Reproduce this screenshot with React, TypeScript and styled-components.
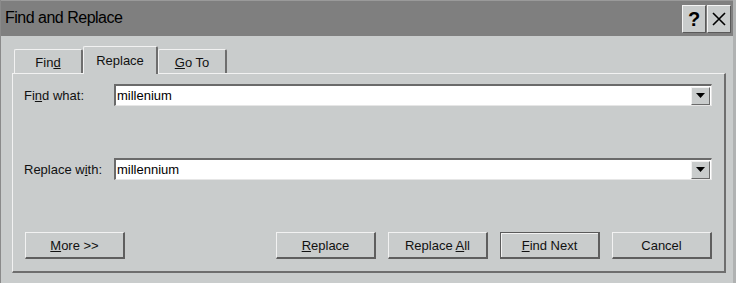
import React from "react";
import styled, { createGlobalStyle } from "styled-components";

const Global = createGlobalStyle`
  html, body { margin: 0; padding: 0; background: #c9cccc; }
  body { font-family: "Liberation Sans", Arial, sans-serif; }
`;

const Window = styled.div`
  width: 736px;
  height: 283px;
  box-sizing: border-box;
  background: #c9cccc;
  border-left: 1px solid #8a8a8a;
  border-right: 3px solid #b0b2b2;
  display: flex;
  flex-direction: column;
  overflow: hidden;
`;

const TitleBar = styled.div`
  height: 35px;
  background: #7f7f7f;
  border-top: 1px solid #9a9a9a;
  display: flex;
  align-items: flex-start;
  justify-content: space-between;
  padding-left: 4px;
`;

const Title = styled.div`
  font-size: 16px;
  letter-spacing: -0.5px;
  line-height: 34px;
  color: #000;
`;

const CaptionButtons = styled.div`
  display: flex;
  gap: 1px;
  padding-top: 4px;
  padding-right: 2px;
`;

const CaptionButton = styled.div`
  width: 24px;
  height: 28px;
  box-sizing: border-box;
  background: #c9cccc;
  border-top: 1px solid #f4f4f4;
  border-left: 1px solid #f4f4f4;
  border-right: 1px solid #5a5a5a;
  border-bottom: 1px solid #5a5a5a;
  display: flex;
  align-items: center;
  justify-content: center;
  font-weight: bold;
  font-size: 20px;
`;

const Body = styled.div`
  padding: 10px 11px 0 11px;
  display: flex;
  flex-direction: column;
`;

const TabRow = styled.div`
  display: flex;
  align-items: flex-end;
  height: 27px;
  padding-left: 2px;
  position: relative;
  z-index: 1;
`;

const Tab = styled.div<{ $active?: boolean }>`
  box-sizing: border-box;
  width: ${(p) => (p.$active ? 75 : 69)}px;
  height: ${(p) => (p.$active ? 28 : 24)}px;
  margin-bottom: ${(p) => (p.$active ? -1 : 0)}px;
  background: #c9cccc;
  border-top: 1px solid #f2f2f2;
  border-left: 1px solid #f2f2f2;
  border-right: 2px solid #6e6e6e;
  border-top-left-radius: 2px;
  border-top-right-radius: 2px;
  display: flex;
  align-items: center;
  justify-content: center;
  font-size: 13px;
  color: #111;
  padding-top: ${(p) => (p.$active ? 0 : 2)}px;
`;

const Panel = styled.div`
  width: 714px;
  height: 200px;
  box-sizing: border-box;
  border-top: 1px solid #f2f2f2;
  border-left: 1px solid #f2f2f2;
  border-right: 2px solid #6e6e6e;
  border-bottom: 2px solid #6e6e6e;
  padding: 10px 12px 0 11px;
  display: flex;
  flex-direction: column;
`;

const FieldRow = styled.div<{ $gap: number }>`
  display: flex;
  align-items: center;
  margin-bottom: ${(p) => p.$gap}px;
`;

const Label = styled.div`
  width: 90px;
  font-size: 13px;
  color: #111;
`;

const Combo = styled.div`
  width: 598px;
  height: 22px;
  box-sizing: border-box;
  background: #fff;
  border-top: 2px solid #6a6a6a;
  border-left: 2px solid #6a6a6a;
  border-right: 1px solid #e6e6e6;
  border-bottom: 1px solid #e6e6e6;
  display: flex;
  align-items: center;
`;

const ComboText = styled.div`
  flex: 1;
  font-size: 13px;
  padding-left: 1px;
  color: #000;
`;

const DropButton = styled.div`
  width: 19px;
  height: 18px;
  box-sizing: border-box;
  margin-right: 1px;
  background: #c9cccc;
  border-top: 1px solid #f2f2f2;
  border-left: 1px solid #f2f2f2;
  border-right: 1px solid #6a6a6a;
  border-bottom: 1px solid #6a6a6a;
  display: flex;
  align-items: center;
  justify-content: center;
`;

const ButtonRow = styled.div`
  display: flex;
  align-items: center;
  margin-top: 1px;
`;

const Spacer = styled.div`
  flex: 1;
`;

const Button = styled.div<{ $default?: boolean }>`
  width: 100px;
  height: 27px;
  box-sizing: border-box;
  margin-left: 12px;
  background: #c9cccc;
  border-top: 1px solid ${(p) => (p.$default ? "#5a5a5a" : "#f2f2f2")};
  border-left: 1px solid ${(p) => (p.$default ? "#5a5a5a" : "#f2f2f2")};
  border-right: 2px solid #5e5e5e;
  border-bottom: 2px solid #5e5e5e;
  box-shadow: ${(p) => (p.$default ? "inset 1px 1px 0 #f2f2f2" : "none")};
  display: flex;
  align-items: center;
  justify-content: center;
  font-size: 13px;
  color: #111;
  &:first-child {
    margin-left: 1px;
  }
`;

const Hot = styled.span`
  text-decoration: underline;
`;

const Arrow = () => (
  <svg width="9" height="5" viewBox="0 0 9 5">
    <path d="M0 0H9L4.5 5Z" fill="#000" />
  </svg>
);

const CloseIcon = () => (
  <svg width="16" height="16" viewBox="0 0 16 16">
    <path d="M2 2L14 14M14 2L2 14" stroke="#000" strokeWidth="1.6" />
  </svg>
);

export default function App() {
  return (
    <>
      <Global />
      <Window>
        <TitleBar>
          <Title>Find and Replace</Title>
          <CaptionButtons>
            <CaptionButton>?</CaptionButton>
            <CaptionButton>
              <CloseIcon />
            </CaptionButton>
          </CaptionButtons>
        </TitleBar>
        <Body>
          <TabRow>
            <Tab>
              <span>
                Fin<Hot>d</Hot>
              </span>
            </Tab>
            <Tab $active>Replace</Tab>
            <Tab>
              <span>
                <Hot>G</Hot>o To
              </span>
            </Tab>
          </TabRow>
          <Panel>
            <FieldRow $gap={52}>
              <Label>
                Fi<Hot>n</Hot>d what:
              </Label>
              <Combo>
                <ComboText>millenium</ComboText>
                <DropButton>
                  <Arrow />
                </DropButton>
              </Combo>
            </FieldRow>
            <FieldRow $gap={51}>
              <Label>
                Replace w<Hot>i</Hot>th:
              </Label>
              <Combo>
                <ComboText>millennium</ComboText>
                <DropButton>
                  <Arrow />
                </DropButton>
              </Combo>
            </FieldRow>
            <ButtonRow>
              <Button>
                <span>
                  <Hot>M</Hot>ore &gt;&gt;
                </span>
              </Button>
              <Spacer />
              <Button>
                <span>
                  <Hot>R</Hot>eplace
                </span>
              </Button>
              <Button>
                <span>
                  Replace <Hot>A</Hot>ll
                </span>
              </Button>
              <Button $default>
                <span>
                  <Hot>F</Hot>ind Next
                </span>
              </Button>
              <Button>Cancel</Button>
            </ButtonRow>
          </Panel>
        </Body>
      </Window>
    </>
  );
}
